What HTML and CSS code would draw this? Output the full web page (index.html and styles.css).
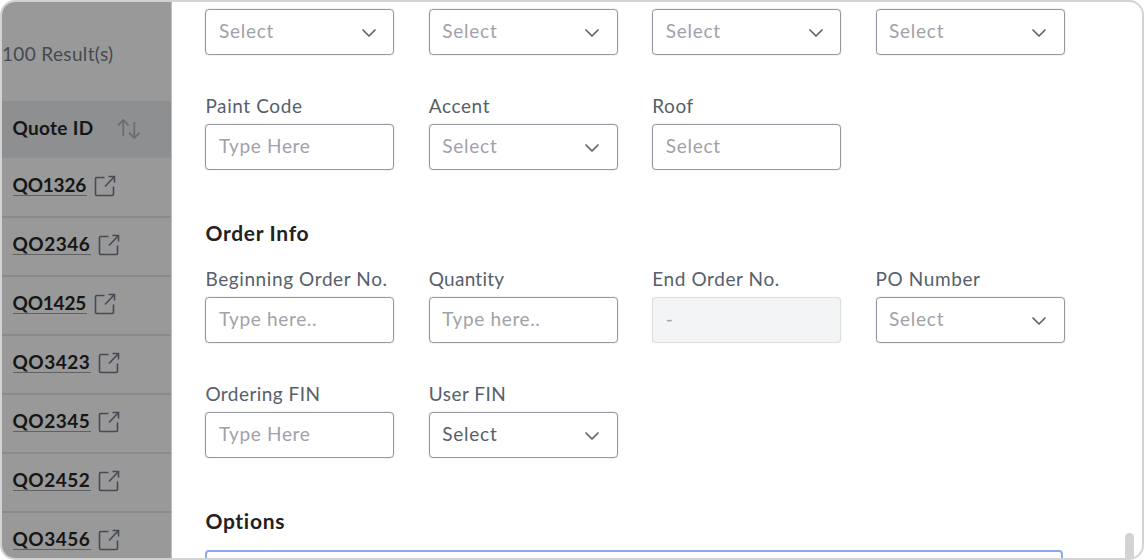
FILE: index.html
```html
<!DOCTYPE html>
<html lang="en">
<head>
<meta charset="utf-8">
<title>Order form</title>
<link rel="stylesheet" href="styles.css">
</head>
<body>
<svg class="defs" width="0" height="0">
  <symbol id="chevron" viewBox="0 0 16 10"><path d="M2 2 8 8l6-6" fill="none" stroke="#5b6370" stroke-width="1.7" stroke-linecap="round" stroke-linejoin="round"/></symbol>
  <symbol id="external" viewBox="0 0 24 24"><path d="M11.500 3.500H3.700Q2.500 3.500 2.500 4.700v15.600q0 1.200 1.200 1.200h15.600q1.200 0 1.200-1.200V12.500M12 12.500 21 3M15.500 2.500h6v6" fill="none" stroke="#454b55" stroke-width="1.600"/></symbol>
</svg>
<div class="frame">
  <aside class="list">
    <div class="results">100 Result(s)</div>
    <div class="head"><span class="head-text">Quote ID</span>
      <svg class="sort" width="24" height="22" viewBox="0 0 24 22"><path d="M6.300 18V2.200M1 7.300l5.300-5.400 5.300 5.400M17.300 4v15.800M12 14.700l5.300 5.400 5.300-5.400" fill="none" stroke="#686c73" stroke-width="1.700"/></svg>
    </div>
    <div class="row"><a class="narrow">QO1326</a><svg class="ext"><use href="#external"/></svg></div>
    <div class="row"><a>QO2346</a><svg class="ext"><use href="#external"/></svg></div>
    <div class="row"><a class="narrow">QO1425</a><svg class="ext"><use href="#external"/></svg></div>
    <div class="row"><a>QO3423</a><svg class="ext"><use href="#external"/></svg></div>
    <div class="row"><a>QO2345</a><svg class="ext"><use href="#external"/></svg></div>
    <div class="row"><a>QO2452</a><svg class="ext"><use href="#external"/></svg></div>
    <div class="row"><a>QO3456</a><svg class="ext"><use href="#external"/></svg></div>
  </aside>
  <main class="panel">
    <div class="grid">
      <div class="box select"><span>Select</span><svg class="chev"><use href="#chevron"/></svg></div>
      <div class="box select"><span>Select</span><svg class="chev"><use href="#chevron"/></svg></div>
      <div class="box select"><span>Select</span><svg class="chev"><use href="#chevron"/></svg></div>
      <div class="box select"><span>Select</span><svg class="chev"><use href="#chevron"/></svg></div>
      <div class="field"><label>Paint Code</label><div class="box"><span>Type Here</span></div></div>
      <div class="field"><label>Accent</label><div class="box select"><span>Select</span><svg class="chev"><use href="#chevron"/></svg></div></div>
      <div class="field"><label>Roof</label><div class="box select"><span>Select</span></div></div>
    </div>
    <h2>Order Info</h2>
    <div class="grid">
      <div class="field"><label>Beginning Order No.</label><div class="box"><span>Type here..</span></div></div>
      <div class="field"><label class="tight">Quantity</label><div class="box"><span>Type here..</span></div></div>
      <div class="field"><label>End Order No.</label><div class="box disabled"><span>-</span></div></div>
      <div class="field"><label>PO Number</label><div class="box select"><span>Select</span><svg class="chev"><use href="#chevron"/></svg></div></div>
      <div class="field"><label class="fin">Ordering FIN</label><div class="box"><span>Type Here</span></div></div>
      <div class="field"><label class="fin">User FIN</label><div class="box select filled"><span>Select</span><svg class="chev"><use href="#chevron"/></svg></div></div>
    </div>
    <h2>Options</h2>
    <div class="options"></div>
    <div class="thumb"></div>
  </main>
</div>
</body>
</html>
```

FILE: styles.css
```css
* { box-sizing: border-box; }
body { margin: 0; background: #fff; font-family: Lato, "Open Sans", sans-serif; font-size: 19px; }
.defs { position: absolute; }
.frame { width: 1144px; height: 560px; border: 2px solid #d3d3d3; border-radius: 15px; overflow: hidden; display: flex; background: #fff; }
.list { flex: none; width: 170px; height: 556px; overflow: hidden; background: #999; border-right: 1px solid #bdbdbd; }
.results { height: 99px; padding-top: 40px; line-height: 24px; color: #444a54; white-space: nowrap; letter-spacing: 0.35px; }
.head { height: 57px; padding-left: 10.500px; display: flex; align-items: center; background: #8d8f91; }
.head-text { width: 104.500px; line-height: 24px; margin-top: -4px; font-weight: 700; color: #161616; letter-spacing: 0.3px; }
.sort { margin-top: -2px; }
.row { height: 59px; padding: 15px 0 0 10.500px; display: flex; align-items: flex-start; border-bottom: 2px solid #888a8c; }
.head + .row { height: 60px; }
.head + .row ~ .row { padding-top: 14px; }
.row a { width: 78px; height: 23px; line-height: 24px; font-weight: 700; color: #161616; border-bottom: 1px solid #5f6164; letter-spacing: 0.5px; white-space: nowrap; }
.row a.narrow { width: 74px; letter-spacing: -0.2px; }
.ext { width: 24px; height: 24px; margin: 1px 0 0 6px; }
.panel { flex: 1; position: relative; padding: 7px 0 0 33.400px; overflow: hidden; }
.grid { display: grid; grid-template-columns: repeat(4, 189px); column-gap: 34.400px; row-gap: 39px; }
.field label { display: block; height: 24px; line-height: 24px; margin-bottom: 6px; color: #56606c; letter-spacing: 0.6px; white-space: nowrap; }
.field label.tight { letter-spacing: 0.250px; }
.field label.fin { letter-spacing: 0.450px; }
.box { height: 46px; padding: 0 16.500px 0 12.500px; display: flex; align-items: center; justify-content: space-between; border: 1px solid #9698a1; box-shadow: 0 0 1px #9698a1; border-radius: 4px; color: #a0a2aa; line-height: 24px; letter-spacing: 0.650px; }
.box span { margin-top: -3px; }
.box.select { letter-spacing: 0.750px; }
.chev { width: 16px; height: 10px; margin-top: 1px; }
.filled { color: #56606c; }
.disabled { background: #f3f4f6; border-color: #dcdedd; box-shadow: 0 0 1px #dcdedd; }
h2 { margin: 51px 0 22px; height: 24px; line-height: 24px; font-size: 21px; font-weight: 700; color: #222; letter-spacing: 0.7px; }
.options { width: 858px; height: 40px; margin-top: -5px; border: 2px solid #8aaaf0; border-radius: 4px; }
.thumb { position: absolute; right: 8px; bottom: -10px; width: 9px; height: 35px; border-radius: 5px; background: #d2d3d5; }
```
